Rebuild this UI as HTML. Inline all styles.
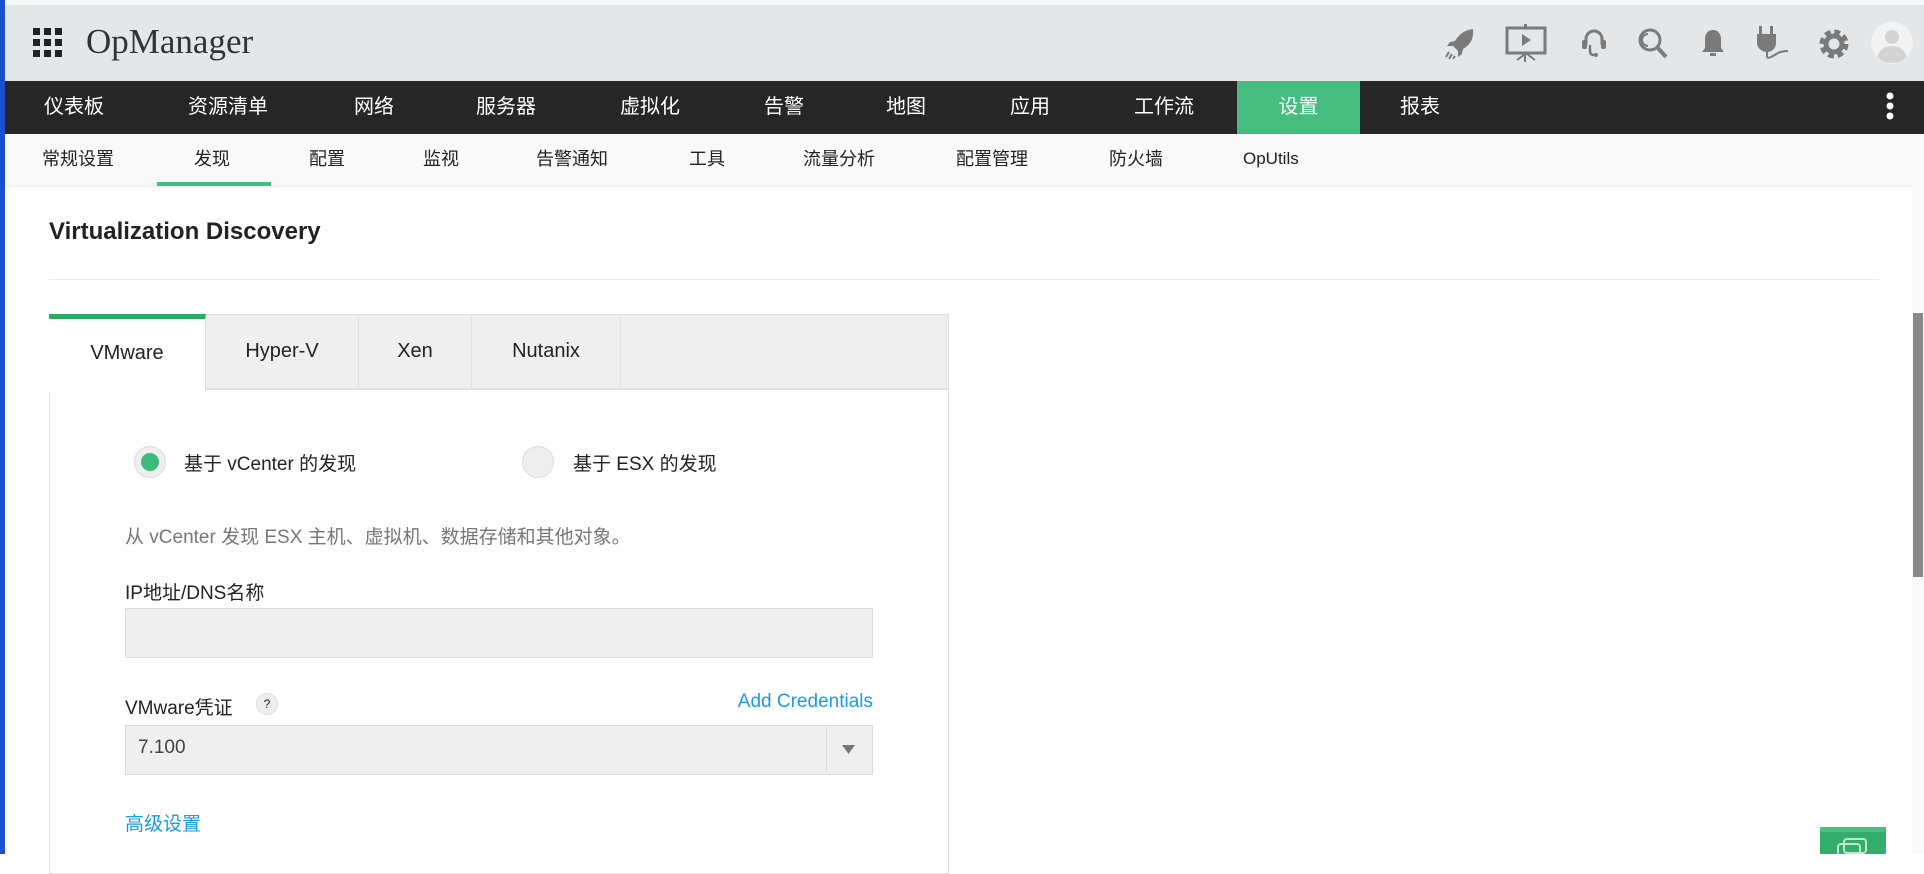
<!DOCTYPE html>
<html><head><meta charset="utf-8"><style>
*{margin:0;padding:0;box-sizing:border-box}
body{width:1924px;height:854px;overflow:hidden;background:#fff;font-family:"Liberation Sans","Noto Sans CJK SC",sans-serif;position:relative;color:#222}
.abs{position:absolute}
#lb{left:0;top:0;width:5px;height:854px;background:#1a4fd0}
#hdr{left:5px;top:0;width:1919px;height:81px;background:#e5e6e7;border-top:5px solid #f7f7f7}
#nav{left:5px;top:81px;width:1919px;height:53px;background:#262626}
.n{position:absolute;top:0;height:53px;line-height:53px;color:#fff;font-size:20px}
#sub{left:5px;top:134px;width:1919px;height:51px;background:#f9f9f9;box-shadow:0 2px 3px rgba(0,0,0,.08)}
.s{position:absolute;top:0;height:51px;line-height:50px;color:#222;font-size:18px}
.ic{position:absolute}
.tab{position:absolute;top:0;height:76px;line-height:74px;font-size:20px;text-align:center;border-right:1px solid #e0e0e0;color:#222}
.lbl{position:absolute;font-size:19px;color:#222}
</style></head><body>
<div id="lb" class="abs"></div>
<div id="hdr" class="abs"></div>
<svg class="abs" style="left:33px;top:28px" width="29" height="29" viewBox="0 0 29 29" fill="#222">
<rect x="0" y="0" width="7" height="7"/><rect x="11" y="0" width="7" height="7"/><rect x="22" y="0" width="7" height="7"/>
<rect x="0" y="11" width="7" height="7"/><rect x="11" y="11" width="7" height="7"/><rect x="22" y="11" width="7" height="7"/>
<rect x="0" y="22" width="7" height="7"/><rect x="11" y="22" width="7" height="7"/><rect x="22" y="22" width="7" height="7"/></svg>
<div class="abs" style="left:86px;top:22px;font-family:'Liberation Serif',serif;font-size:35px;color:#333">OpManager</div>
<!-- header icons -->
<svg class="ic" style="left:1445px;top:28px" width="30" height="32" viewBox="0 0 30 32"><path fill="#7a7a7a" d="M28 1C20 2 14 6 10 13l-5 1-3 4 6 0 5 5 0 6 4-3 1-5c7-4 11-10 10-20z"/><path d="M4 24l-3 5M7 26l-3 5M10 28l-2 3" stroke="#7a7a7a" stroke-width="2"/></svg>
<svg class="ic" style="left:1505px;top:24px" width="42" height="38" viewBox="0 0 42 38"><rect x="2" y="4" width="38" height="25" fill="none" stroke="#7a7a7a" stroke-width="3"/><rect x="19" y="0" width="3" height="5" fill="#7a7a7a"/><path d="M17 10l9 6-9 6z" fill="#7a7a7a"/><path d="M20 29v9M20 30l-8 6M22 30l8 6" stroke="#7a7a7a" stroke-width="2"/></svg>
<svg class="ic" style="left:1580px;top:28px" width="28" height="32" viewBox="0 0 28 32"><path d="M6 17V11a8 8 0 0 1 16 0v6" fill="none" stroke="#7a7a7a" stroke-width="3"/><rect x="2" y="12" width="5" height="9" rx="2" fill="#7a7a7a"/><rect x="21" y="12" width="5" height="9" rx="2" fill="#7a7a7a"/><path d="M10 17v6q0 4 4 4h1" fill="none" stroke="#7a7a7a" stroke-width="2.5"/><circle cx="16" cy="27" r="2" fill="#7a7a7a"/></svg>
<svg class="ic" style="left:1637px;top:27px" width="32" height="33" viewBox="0 0 32 33"><circle cx="13" cy="13" r="10" fill="none" stroke="#7a7a7a" stroke-width="3"/><path d="M20 20l9 10" stroke="#7a7a7a" stroke-width="4"/><path d="M11 7a6 6 0 0 0 0 12" fill="none" stroke="#7a7a7a" stroke-width="2"/></svg>
<svg class="ic" style="left:1700px;top:28px" width="26" height="30" viewBox="0 0 26 30"><path fill="#7a7a7a" d="M13 2c-5 0-8 4-8 9v9l-3 4h22l-3-4v-9c0-5-3-9-8-9z"/><rect x="10" y="25" width="6" height="3" fill="#7a7a7a"/></svg>
<svg class="ic" style="left:1756px;top:26px" width="36" height="36" viewBox="0 0 36 36"><rect x="3" y="0" width="3" height="8" fill="#7a7a7a"/><rect x="14" y="0" width="3" height="8" fill="#7a7a7a"/><path fill="#7a7a7a" d="M1 8h19v9c0 5-4 9-9 9s-10-4-10-9z"/><path d="M11 26v4q0 3 4 1t7-4q4-2 10-2" fill="none" stroke="#7a7a7a" stroke-width="2"/></svg>
<svg class="ic" style="left:1818px;top:28px" width="32" height="32" viewBox="0 0 32 32"><circle cx="16" cy="16" r="11.5" fill="none" stroke="#7a7a7a" stroke-width="6" stroke-dasharray="5.5 3.53"/><circle cx="16" cy="16" r="8" fill="none" stroke="#7a7a7a" stroke-width="5"/></svg>
<svg class="abs" style="left:1871px;top:22px" width="42" height="42" viewBox="0 0 42 42"><circle cx="21" cy="21" r="21" fill="#f3f3f3"/><circle cx="21" cy="15" r="7" fill="#d3d3d3"/><path d="M6 35q4-11 15-11t15 11q-6 6-15 6t-15-6z" fill="#d3d3d3"/></svg>
<div id="nav" class="abs">
<div class="n" style="left:39px">仪表板</div><div class="n" style="left:183px">资源清单</div><div class="n" style="left:349px">网络</div><div class="n" style="left:471px">服务器</div><div class="n" style="left:615px">虚拟化</div><div class="n" style="left:759px">告警</div><div class="n" style="left:881px">地图</div><div class="n" style="left:1005px">应用</div><div class="n" style="left:1129px">工作流</div>
<div class="n" style="left:1232px;width:123px;background:#45bd7e;text-align:center">设置</div>
<div class="n" style="left:1395px">报表</div>
<svg class="abs" style="left:1880px;top:10px" width="10" height="32" viewBox="0 0 10 32" fill="#fff"><circle cx="5" cy="5" r="3.5"/><circle cx="5" cy="15" r="3.5"/><circle cx="5" cy="25" r="3.5"/></svg>
</div>
<div id="sub" class="abs">
<div class="s" style="left:37px">常规设置</div><div class="s" style="left:189px">发现</div><div class="s" style="left:304px">配置</div><div class="s" style="left:418px">监视</div><div class="s" style="left:531px">告警通知</div><div class="s" style="left:684px">工具</div><div class="s" style="left:798px">流量分析</div><div class="s" style="left:951px">配置管理</div><div class="s" style="left:1104px">防火墙</div><div class="s" style="left:1238px;font-size:17px">OpUtils</div>
<div class="abs" style="left:152px;top:48px;width:114px;height:4px;background:#45bd7e"></div>
</div>
<div class="abs" style="left:49px;top:218px;font-size:24px;font-weight:bold;color:#222">Virtualization Discovery</div>
<div class="abs" style="left:49px;top:279px;width:1830px;height:1px;background:#ececec"></div>
<!-- panel -->
<div class="abs" style="left:49px;top:314px;width:900px;height:560px;border:1px solid #e0e0e0;background:#fff"></div>
<div class="abs" style="left:49px;top:314px;width:900px;height:76px;background:#efefef;border:1px solid #e0e0e0;border-bottom:2px solid #e0e0e0"></div>
<div class="tab" style="left:49px;width:157px;background:#fff;border-top:5px solid #2aaa65;height:78px;top:314px;line-height:68px">VMware</div>
<div class="tab" style="left:206px;top:314px;width:153px">Hyper-V</div>
<div class="tab" style="left:359px;top:314px;width:113px">Xen</div>
<div class="tab" style="left:472px;top:314px;width:149px">Nutanix</div>
<div class="abs" style="left:134px;top:446px;width:32px;height:32px;border-radius:50%;background:#eee;border:1px solid #ddd"></div>
<div class="abs" style="left:141px;top:453px;width:18px;height:18px;border-radius:50%;background:#3dbb78"></div>
<div class="lbl" style="left:184px;top:449px">基于 vCenter 的发现</div>
<div class="abs" style="left:522px;top:446px;width:32px;height:32px;border-radius:50%;background:#eee;border:1px solid #ddd"></div>
<div class="lbl" style="left:573px;top:449px">基于 ESX 的发现</div>
<div class="lbl" style="left:125px;top:522px;color:#777">从 vCenter 发现 ESX 主机、虚拟机、数据存储和其他对象。</div>
<div class="lbl" style="left:125px;top:578px">IP地址/DNS名称</div>
<div class="abs" style="left:125px;top:608px;width:748px;height:50px;background:#efefef;border:1px solid #dcdcdc"></div>
<div class="lbl" style="left:125px;top:693px">VMware凭证</div>
<div class="abs" style="left:256px;top:693px;width:22px;height:22px;border-radius:50%;background:#eee;border:1px solid #ddd;font-size:12px;text-align:center;line-height:20px">?</div>
<div class="lbl" style="left:725px;top:691px;color:#1a9be6;width:148px;text-align:right">Add Credentials</div>
<div class="abs" style="left:125px;top:725px;width:748px;height:50px;background:#efefef;border:1px solid #dcdcdc"></div>
<div class="abs" style="left:826px;top:727px;width:1px;height:46px;background:#dcdcdc"></div>
<div class="lbl" style="left:138px;top:737px;color:#444">7.100</div>
<svg class="abs" style="left:842px;top:745px" width="13" height="9"><path d="M0 0h13L6.5 9z" fill="#777"/></svg>
<div class="lbl" style="left:125px;top:809px;color:#1a9be6">高级设置</div>
<!-- scrollbar -->
<div class="abs" style="left:1912px;top:185px;width:12px;height:669px;background:#fafafa"></div>
<div class="abs" style="left:1913px;top:313px;width:10px;height:264px;background:#888"></div>
<div class="abs" style="left:1820px;top:827px;width:66px;height:27px;background:#32ad6a;border-top:5px solid #48c07f"></div>
<svg class="abs" style="left:1836px;top:838px" width="34" height="16" fill="none" stroke="#bfe8cf" stroke-width="2"><rect x="8" y="1" width="22" height="14" rx="3"/><rect x="2" y="6" width="22" height="14" rx="3"/></svg>
</body></html>
